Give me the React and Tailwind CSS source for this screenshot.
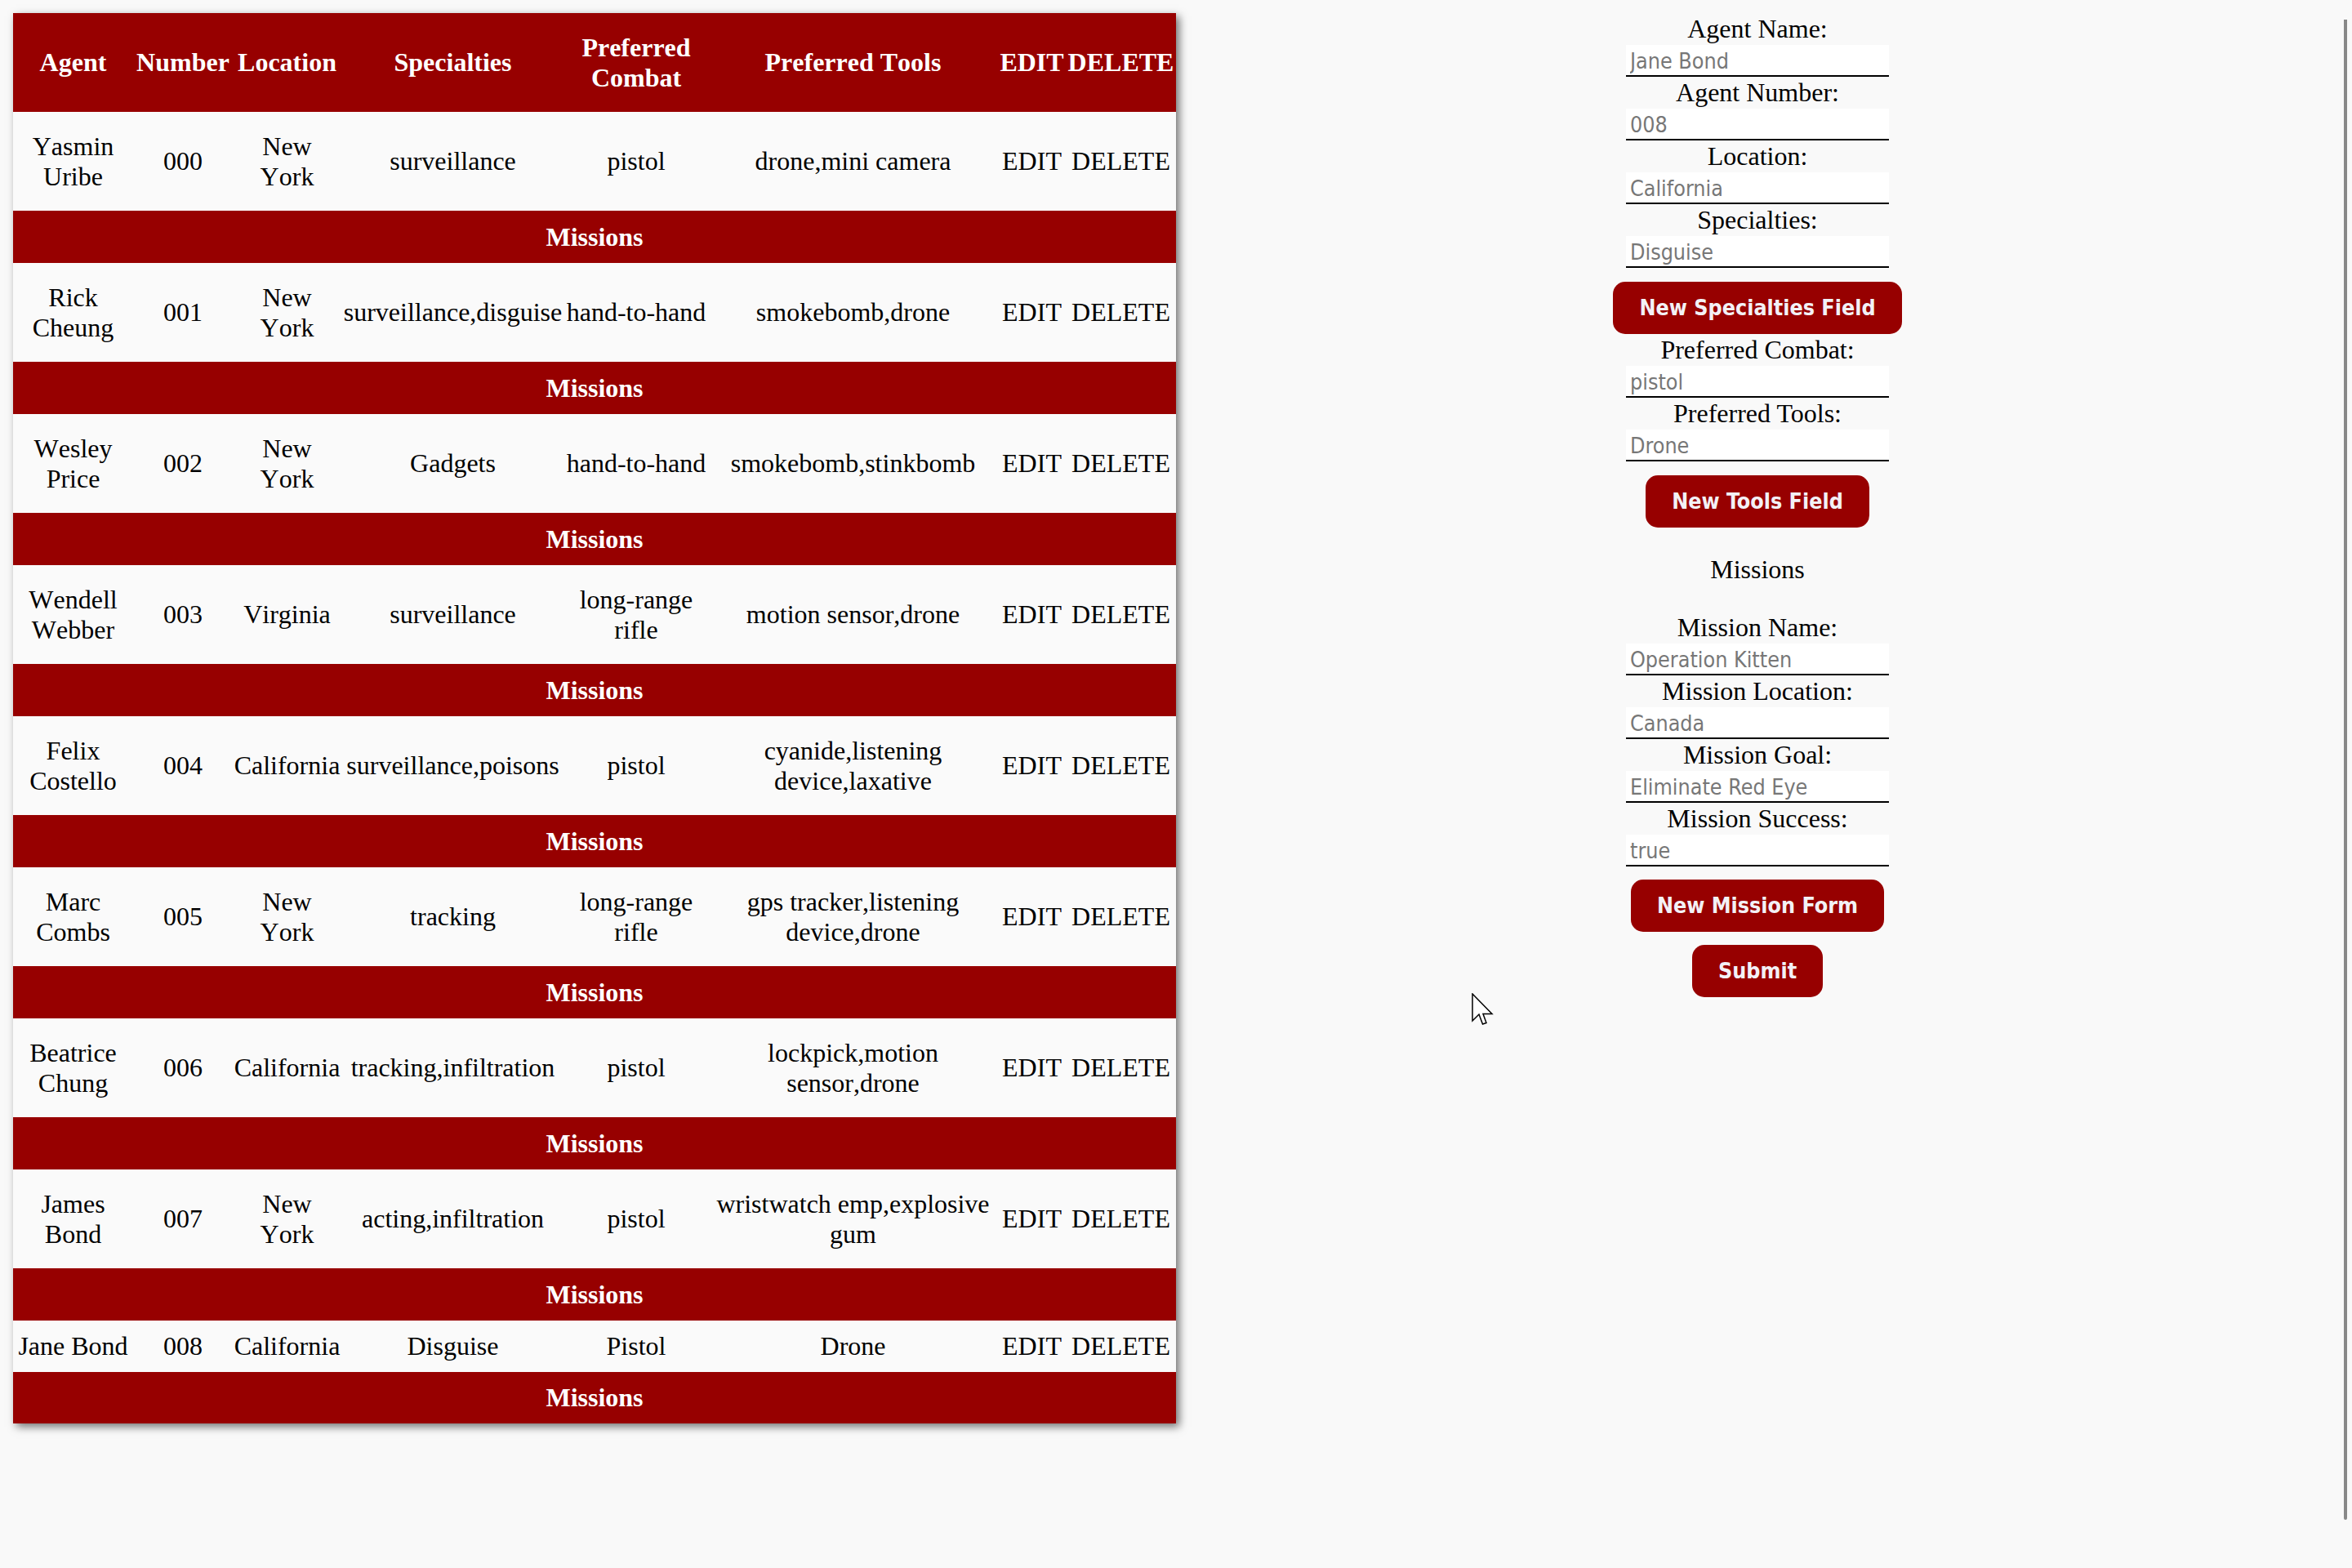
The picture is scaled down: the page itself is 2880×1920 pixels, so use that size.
import React from "react";

const agents = [
  { name: "Yasmin Uribe", number: "000", location: "New York", specialties: "surveillance", combat: "pistol", tools: "drone,mini camera" },
  { name: "Rick Cheung", number: "001", location: "New York", specialties: "surveillance,disguise", combat: "hand-to-hand", tools: "smokebomb,drone" },
  { name: "Wesley Price", number: "002", location: "New York", specialties: "Gadgets", combat: "hand-to-hand", tools: "smokebomb,stinkbomb" },
  { name: "Wendell Webber", number: "003", location: "Virginia", specialties: "surveillance", combat: "long-range rifle", tools: "motion sensor,drone" },
  { name: "Felix Costello", number: "004", location: "California", specialties: "surveillance,poisons", combat: "pistol", tools: "cyanide,listening device,laxative" },
  { name: "Marc Combs", number: "005", location: "New York", specialties: "tracking", combat: "long-range rifle", tools: "gps tracker,listening device,drone" },
  { name: "Beatrice Chung", number: "006", location: "California", specialties: "tracking,infiltration", combat: "pistol", tools: "lockpick,motion sensor,drone" },
  { name: "James Bond", number: "007", location: "New York", specialties: "acting,infiltration", combat: "pistol", tools: "wristwatch emp,explosive gum" },
  { name: "Jane Bond", number: "008", location: "California", specialties: "Disguise", combat: "Pistol", tools: "Drone", short: true },
];

const agentFields = [
  { label: "Agent Name:", value: "Jane Bond" },
  { label: "Agent Number:", value: "008" },
  { label: "Location:", value: "California" },
  { label: "Specialties:", value: "Disguise" },
];

const missionFields = [
  { label: "Mission Name:", value: "Operation Kitten" },
  { label: "Mission Location:", value: "Canada" },
  { label: "Mission Goal:", value: "Eliminate Red Eye" },
  { label: "Mission Success:", value: "true" },
];

const Field = ({ label, value }) => (
  <>
    <label className="block h-[39px] leading-[39px] text-[32px] text-black font-['Liberation_Serif',serif]">
      {label}
    </label>
    <input
      type="text"
      placeholder={value}
      className="block w-[322px] h-[39px] bg-white border-0 border-b-2 border-black px-[5px] pt-[3px] text-[26.67px] outline-none placeholder:text-[#777777] font-['DejaVu_Sans_Condensed','DejaVu_Sans',sans-serif] font-stretch-condensed"
    />
  </>
);

const RedButton = ({ children, className = "mt-[17px]" }) => (
  <button
    type="button"
    className={`${className} h-[64px] px-[32px] rounded-[15px] bg-[#970000] text-[#f3f1f6] text-[26.67px] font-bold leading-none font-['DejaVu_Sans_Condensed','DejaVu_Sans',sans-serif] font-stretch-condensed`}
  >
    {children}
  </button>
);

const App = () => {
  return (
    <div className="relative min-h-screen bg-[#f9f9f9] flex items-start">
      {/* Agents table */}
      <div className="ml-[16px] mt-[16px] shadow-[4px_4px_10px_rgba(0,0,0,0.55)]">
        <table className="table-fixed border-collapse w-[1424px] text-[32px] leading-[1.15] text-center [font-kerning:none] font-['Liberation_Serif',serif]">
          <colgroup>
            <col className="w-[147px]" />
            <col className="w-[122px]" />
            <col className="w-[133px]" />
            <col className="w-[273px]" />
            <col className="w-[176px]" />
            <col className="w-[355px]" />
            <col className="w-[83px]" />
            <col className="w-[135px]" />
          </colgroup>
          <thead>
            <tr className="h-[121px] bg-[#970000] text-white">
              <th className="px-[2px] font-bold">Agent</th>
              <th className="px-[2px] font-bold">Number</th>
              <th className="px-[1px] font-bold">Location</th>
              <th className="px-[2px] font-bold">Specialties</th>
              <th className="px-[2px] font-bold">Preferred Combat</th>
              <th className="px-[2px] font-bold">Preferred Tools</th>
              <th className="px-[2px] font-bold">EDIT</th>
              <th className="px-[2px] font-bold">DELETE</th>
            </tr>
          </thead>
          <tbody>
            {agents.map((agent) => (
              <React.Fragment key={agent.number}>
                <tr className={`${agent.short ? "h-[63px]" : "h-[121px]"} bg-[#fafafa] text-black`}>
                  <td className="px-[2px]">{agent.name}</td>
                  <td className="px-[2px]">{agent.number}</td>
                  <td className="px-[1px]">{agent.location}</td>
                  <td className="px-[2px]">{agent.specialties}</td>
                  <td className="px-[2px]">{agent.combat}</td>
                  <td className="px-[2px]">{agent.tools}</td>
                  <td className="px-[2px]">EDIT</td>
                  <td className="px-[2px]">DELETE</td>
                </tr>
                <tr className={`${agent.short ? "h-[63px]" : "h-[64px]"} bg-[#970000] text-white`}>
                  <td colSpan={8} className="font-bold">
                    Missions
                  </td>
                </tr>
              </React.Fragment>
            ))}
          </tbody>
        </table>
      </div>

      {/* Agent form */}
      <div className="flex-1 mr-[16px] mt-[16px] flex justify-center">
        <form className="flex flex-col items-center">
          {agentFields.map((f) => (
            <Field key={f.label} {...f} />
          ))}
          <RedButton>New Specialties Field</RedButton>
          <Field label="Preferred Combat:" value="pistol" />
          <Field label="Preferred Tools:" value="Drone" />
          <RedButton>New Tools Field</RedButton>
          <p className="my-[32px] h-[39px] leading-[39px] text-[32px] text-black font-['Liberation_Serif',serif]">
            Missions
          </p>
          {missionFields.map((f) => (
            <Field key={f.label} {...f} />
          ))}
          <RedButton className="mt-[16px]">New Mission Form</RedButton>
          <RedButton className="mt-[16px]">Submit</RedButton>
        </form>
      </div>

      {/* scrollbar thumb */}
      <div className="absolute right-[6px] top-[24px] w-[4px] h-[1837px] bg-[#888888] rounded-b-[2px]" />

      {/* mouse cursor */}
      <svg className="absolute left-[1802px] top-[1216px]" width="28" height="42" viewBox="-1 -1 28 42">
        <path d="M0 0 L0 33 L8 25 L12.5 37 L17 35.5 L13 24.5 L24 24.5 Z" fill="white" stroke="black" strokeWidth="1.5" strokeLinejoin="miter" />
      </svg>
    </div>
  );
};

export default App;
